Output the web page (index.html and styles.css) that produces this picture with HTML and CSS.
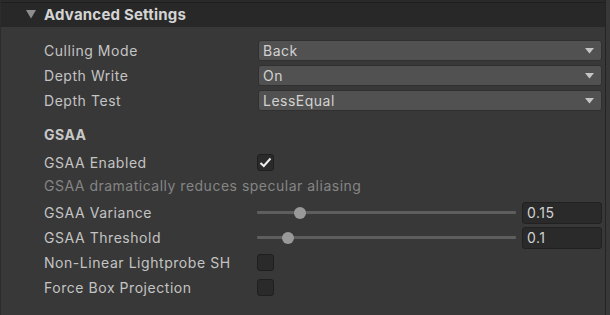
FILE: index.html
```html
<!DOCTYPE html>
<html>
<head>
<meta charset="utf-8">
<link rel="stylesheet" href="styles.css">
</head>
<body>
<div class="inspector">
  <div class="topline"></div>
  <div class="header">
    <svg class="foldout" width="10" height="9" viewBox="0 0 10 9"><path d="M0 0 H10 L5 8.5 Z" fill="#8e8e8e"/></svg>
    <span class="header-title">Advanced Settings</span>
  </div>
  <div class="content">
    <div class="row r-first">
      <div class="label">Culling Mode</div>
      <div class="dropdown"><span>Back</span><svg class="arrow" width="9" height="6" viewBox="0 0 9 6"><path d="M0 0 H9 L4.5 5.5 Z" fill="#c4c4c4"/></svg></div>
    </div>
    <div class="row r-gap4">
      <div class="label">Depth Write</div>
      <div class="dropdown"><span>On</span><svg class="arrow" width="9" height="6" viewBox="0 0 9 6"><path d="M0 0 H9 L4.5 5.5 Z" fill="#c4c4c4"/></svg></div>
    </div>
    <div class="row r-gap4">
      <div class="label">Depth Test</div>
      <div class="dropdown"><span>LessEqual</span><svg class="arrow" width="9" height="6" viewBox="0 0 9 6"><path d="M0 0 H9 L4.5 5.5 Z" fill="#c4c4c4"/></svg></div>
    </div>
    <div class="row r-section">
      <div class="section-title">GSAA</div>
    </div>
    <div class="row r-gap7">
      <div class="label">GSAA Enabled</div>
      <div class="checkbox"><svg width="13" height="11" viewBox="0 0 13 11"><path d="M1.5 6 L4.8 9 L11.5 1.5" fill="none" stroke="#ededed" stroke-width="2"/></svg></div>
    </div>
    <div class="row r-gap2">
      <div class="help">GSAA dramatically reduces specular aliasing</div>
    </div>
    <div class="row r-gap6">
      <div class="label">GSAA Variance</div>
      <div class="slider"><div class="track"></div><div class="thumb" style="left: 43px"></div></div>
      <div class="field">0.15</div>
    </div>
    <div class="row r-gap4">
      <div class="label">GSAA Threshold</div>
      <div class="slider"><div class="track"></div><div class="thumb" style="left: 31px"></div></div>
      <div class="field">0.1</div>
    </div>
    <div class="row r-gap4">
      <div class="label">Non-Linear Lightprobe SH</div>
      <div class="checkbox"></div>
    </div>
    <div class="row r-gap4">
      <div class="label">Force Box Projection</div>
      <div class="checkbox"></div>
    </div>
  </div>
</div>
</body>
</html>
```
FILE: styles.css
```css
html, body {
  margin: 0;
  padding: 0;
  background: #383838;
  width: 610px;
  height: 315px;
  overflow: hidden;
  font-family: Inter, "Noto Sans", sans-serif;
}

.inspector {
  width: 604px;
  height: 315px;
  border-left: 1px solid #2c2c2c;
  border-right: 1px solid #242424;
  background: #383838;
}

.topline {
  height: 2px;
  background: #2a2a2a;
}

.header {
  border-top: 1px solid #1e1e1e;
  background: #282828;
  display: flex;
  align-items: center;
  padding-bottom: 2px;
  box-sizing: border-box;
  height: 25px;
}

.foldout {
  margin-left: 25px;
  margin-right: 8px;
  flex: none;
}

.header-title {
  color: #d4d4d4;
  font-weight: 700;
  font-size: 15px;
  letter-spacing: 0.2px;
}

.content {
  padding-left: 43px;
}

.row {
  display: flex;
  align-items: center;
  height: 21px;
}

.r-first { margin-top: 13px; }
.r-gap4 { margin-top: 4px; }
.r-section { margin-top: 13px; }
.r-gap7 { margin-top: 7px; }
.r-gap2 { margin-top: 2px; }
.r-gap6 { margin-top: 6px; }

.label {
  width: 213px;
  flex: none;
  color: #c4c4c4;
  font-size: 14px;
  letter-spacing: 0.55px;
  white-space: nowrap;
}

.section-title {
  color: #c8c8c8;
  font-weight: 700;
  font-size: 14px;
  letter-spacing: 0.5px;
}

.help {
  color: #858585;
  font-size: 14px;
  letter-spacing: 0.5px;
  white-space: nowrap;
}

.dropdown {
  margin-left: 1px;
  width: 344px;
  height: 21px;
  box-sizing: border-box;
  background: #515151;
  border: 1px solid #303030;
  border-radius: 3px;
  display: flex;
  align-items: center;
  justify-content: space-between;
  padding: 0 7px 0 4px;
  color: #d2d2d2;
  font-size: 14px;
  letter-spacing: 0.5px;
}

.dropdown .arrow {
  flex: none;
}

.checkbox {
  width: 17px;
  height: 17px;
  box-sizing: border-box;
  background: #2a2a2a;
  border: 1px solid #1f1f1f;
  border-radius: 3px;
  display: flex;
  align-items: center;
  justify-content: center;
}

.slider {
  position: relative;
  width: 259px;
  height: 21px;
  flex: none;
}

.slider .track {
  position: absolute;
  left: 0;
  right: 0;
  top: 9px;
  height: 3px;
  background: #5e5e5e;
  border-radius: 1px;
}

.slider .thumb {
  position: absolute;
  top: 4.5px;
  width: 12px;
  height: 12px;
  margin-left: -6px;
  border-radius: 50%;
  background: #999999;
}

.field {
  margin-left: 6px;
  width: 80px;
  height: 22px;
  box-sizing: border-box;
  background: #2a2a2a;
  border: 1px solid #212121;
  border-radius: 3px;
  display: flex;
  align-items: center;
  padding-left: 4px;
  color: #d2d2d2;
  font-size: 14px;
  letter-spacing: 0.5px;
}
```
